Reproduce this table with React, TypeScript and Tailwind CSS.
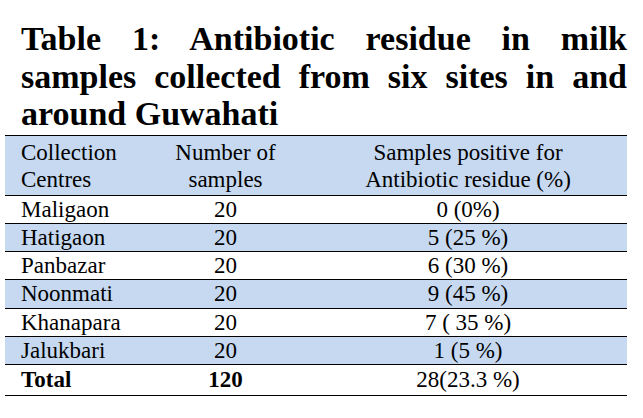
import React from "react";

const rows: [string, string, string][] = [
  ["Maligaon", "20", "0 (0%)"],
  ["Hatigaon", "20", "5 (25 %)"],
  ["Panbazar", "20", "6 (30 %)"],
  ["Noonmati", "20", "9 (45 %)"],
  ["Khanapara", "20", "7 ( 35 %)"],
  ["Jalukbari", "20", "1 (5 %)"],
];

export default function App() {
  return (
    <div className="w-[643px] h-[418px] bg-white text-black overflow-hidden font-['Liberation_Serif','Times_New_Roman',serif]">
      <div className="pt-[20px] pl-[21px] pr-[16px]">
        <h1 className="text-[34px] leading-[37.5px] font-bold text-justify">
          Table 1: Antibiotic residue in milk samples collected from six sites in and around Guwahati
        </h1>
      </div>
      <div className="ml-[5px] mt-[2px] w-[622px] text-[23px]">
        <div className="grid grid-cols-[137px_167px_318px] h-[61px] bg-[#c6d9f1] border-t border-b border-black pt-[3px] leading-[27px]">
          <div className="pl-[16px]">
            Collection
            <br />
            Centres
          </div>
          <div className="text-center">
            Number of
            <br />
            samples
          </div>
          <div className="text-center">
            Samples positive for
            <br />
            Antibiotic residue (%)
          </div>
        </div>
        {rows.map((r, i) => (
          <div
            key={r[0]}
            className={
              i % 2 === 1
                ? "grid grid-cols-[137px_167px_318px] h-[28.33px] leading-[27px] border-b border-black bg-[#c6d9f1]"
                : "grid grid-cols-[137px_167px_318px] h-[28.33px] leading-[27px] border-b border-black bg-white"
            }
          >
            <div className="pl-[16px]">{r[0]}</div>
            <div className="text-center">{r[1]}</div>
            <div className="text-center">{r[2]}</div>
          </div>
        ))}
        <div className="grid grid-cols-[137px_167px_318px] h-[31px] leading-[30px] border-b border-black font-bold">
          <div className="pl-[16px]">Total</div>
          <div className="text-center">120</div>
          <div className="text-center font-normal">28(23.3 %)</div>
        </div>
      </div>
    </div>
  );
}
